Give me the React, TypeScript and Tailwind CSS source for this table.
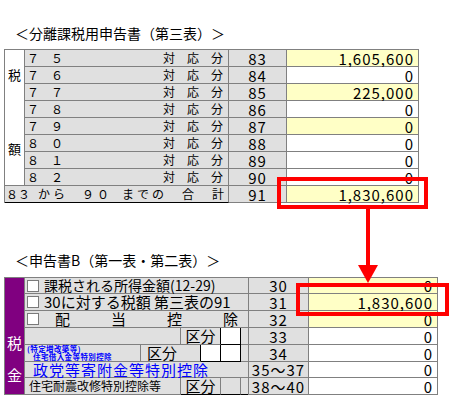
const topRows = [
  { label: '７　５', no: '83', value: '1,605,600', yellow: true },
  { label: '７　６', no: '84', value: '0', yellow: false },
  { label: '７　７', no: '85', value: '225,000', yellow: true },
  { label: '７　８', no: '86', value: '0', yellow: false },
  { label: '７　９', no: '87', value: '0', yellow: true },
  { label: '８　０', no: '88', value: '0', yellow: false },
  { label: '８　１', no: '89', value: '0', yellow: false },
  { label: '８　２', no: '90', value: '0', yellow: false },
];

const cell = 'border-b border-r border-[#808080]';
const num = "font-['Noto_Sans_CJK_JP',sans-serif] text-[15px] leading-[15px] tracking-[1px]";

const CheckBox = () => (
  <span className="ml-[2px] h-[12px] w-[12px] shrink-0 border border-[#7a7a7a] bg-white" />
);

const NoCell = ({ no, w }: { no: string; w: string }) => (
  <div className={`${cell} ${w} ${num} flex items-center justify-center bg-[#e0e0e0] tracking-[0px]`}>{no}</div>
);

const ValueCell = ({ value, yellow, w }: { value: string; yellow?: boolean; w: string }) => (
  <div className={`${cell} ${w} ${num} flex items-center justify-end pr-[4px] ${yellow ? 'bg-[#ffffc6]' : 'bg-white'}`}>
    {value}
  </div>
);

export default function App() {
  return (
    <div className="relative h-[401px] w-[467px] overflow-hidden bg-white font-['Noto_Sans_CJK_JP',sans-serif] text-black">
      <div className="pl-[15px] pt-[23px] text-[14px] leading-[20px]">＜分離課税用申告書（第三表）＞</div>

      {/* 第三表 */}
      <div className="ml-[4px] mt-[6px] w-[415px] border-l border-t border-[#808080]">
        <div className="flex">
          <div className={`${cell} flex h-[136px] w-[20px] flex-col items-center bg-white text-[13px] leading-[16px]`}>
            <span className="mt-[17px]">税</span>
            <span className="mt-[58px]">額</span>
          </div>
          <div className="flex flex-col">
            {topRows.map((r) => (
              <div key={r.no} className="flex h-[17px]">
                <div className={`${cell} flex w-[204px] items-center justify-between bg-[#e0e0e0] pl-[2px] pr-[5px] text-[12px] leading-[16px]`}>
                  <span>{r.label}</span>
                  <span>対　応　分</span>
                </div>
                <NoCell no={r.no} w="w-[58px]" />
                <ValueCell value={r.value} yellow={r.yellow} w="w-[132px]" />
              </div>
            ))}
          </div>
        </div>
        <div className="flex h-[17px]">
          <div className="flex w-[224px] items-center border-b border-r border-b-black border-r-[#808080] bg-[#e0e0e0] pl-[1px] text-[12px] leading-[16px]">
            <span className="tracking-[0px]">８３</span>
            <span className="ml-[8px] tracking-[3px]">から</span>
            <span className="ml-[14px] tracking-[3px]">９０</span>
            <span className="ml-[10px] tracking-[3px]">までの</span>
            <span className="ml-[15px]">合</span>
            <span className="ml-[18px]">計</span>
          </div>
          <NoCell no="91" w="w-[58px]" />
          <ValueCell value="1,830,600" yellow w="w-[132px]" />
        </div>
      </div>

      <div className="pl-[15px] pt-[47px] text-[14px] leading-[20px]">＜申告書B（第一表・第二表）＞</div>

      {/* 第一表・第二表 */}
      <div className="ml-[4px] mt-[7px] flex w-[434px] border-l border-t border-[#808080]">
        <div className={`${cell} flex h-[117px] w-[20px] flex-col items-center justify-end gap-[14px] bg-[#800080] pb-[10px] text-[15px] leading-[18px] text-white`}>
          <span>税</span>
          <span>金</span>
        </div>
        <div className="flex flex-col">
          <div className="flex h-[16px]">
            <div className={`${cell} flex w-[224px] items-center gap-[5px] bg-[#e0e0e0] text-[14px] leading-[15px]`}>
              <CheckBox />
              <span>課税される所得金額(12-29)</span>
            </div>
            <NoCell no="30" w="w-[60px]" />
            <ValueCell value="0" yellow w="w-[129px]" />
          </div>
          <div className="flex h-[17px]">
            <div className={`${cell} flex w-[224px] items-center gap-[5px] bg-[#e0e0e0] text-[15px] leading-[16px]`}>
              <CheckBox />
              <span>30に対する税額 第三表の91</span>
            </div>
            <NoCell no="31" w="w-[60px]" />
            <ValueCell value="1,830,600" yellow w="w-[129px]" />
          </div>
          <div className="flex h-[17px]">
            <div className={`${cell} flex w-[224px] items-center bg-[#e0e0e0] text-[15px] leading-[16px]`}>
              <CheckBox />
              <span className="flex flex-1 justify-between pl-[16px] pr-[10px]">
                <span>配</span>
                <span>当</span>
                <span>控</span>
                <span>除</span>
              </span>
            </div>
            <NoCell no="32" w="w-[60px]" />
            <ValueCell value="0" yellow w="w-[129px]" />
          </div>
          <div className="flex h-[17px]">
            <div className="flex w-[224px] border-r border-[#808080]">
              <div className={`${cell} w-[156px] bg-[#e0e0e0]`} />
              <div className="flex w-[40px] items-center justify-center border-b border-r border-b-[#808080] border-r-black bg-[#e0e0e0] text-[15px] leading-[16px]">区分</div>
              <div className="w-[20px] border-b border-r border-black bg-white" />
              <div className="w-[7px] border-b border-[#808080] bg-[#e0e0e0]" />
            </div>
            <NoCell no="33" w="w-[60px]" />
            <ValueCell value="0" w="w-[129px]" />
          </div>
          <div className="flex h-[17px]">
            <div className="flex w-[224px] border-r border-[#808080]">
              <div className={`${cell} flex w-[116px] flex-col justify-center bg-[#e0e0e0] pl-[2px] text-[7.5px] font-bold leading-[8px] tracking-[0.4px] text-[#0000ff]`}>
                <span>(特定増改築等)</span>
                <span className="pl-[6px]">住宅借入金等特別控除</span>
              </div>
              <div className="flex w-[60px] items-center border-b border-r border-b-[#808080] border-r-black bg-[#e0e0e0] pl-[6px] text-[15px] leading-[16px]">区分</div>
              <div className="w-[20px] border-b border-r border-black bg-white" />
              <div className="w-[20px] border-b border-r border-black bg-white" />
              <div className="w-[7px] border-b border-[#808080] bg-[#e0e0e0]" />
            </div>
            <NoCell no="34" w="w-[60px]" />
            <ValueCell value="0" w="w-[129px]" />
          </div>
          <div className="flex h-[16px]">
            <div className={`${cell} flex w-[224px] items-center bg-[#e0e0e0] pl-[8px] text-[15px] leading-[15px] tracking-[1px] text-[#0000ff]`}>
              政党等寄附金等特別控除
            </div>
            <NoCell no="35〜37" w="w-[60px]" />
            <ValueCell value="0" w="w-[129px]" />
          </div>
          <div className="flex h-[17px]">
            <div className="flex w-[224px] border-r border-[#808080]">
              <div className={`${cell} flex w-[156px] items-center bg-[#e0e0e0] pl-[4px] text-[12px] leading-[16px]`}>住宅耐震改修特別控除等</div>
              <div className="flex w-[40px] items-center justify-center border-b border-r border-b-black border-r-[#808080] bg-[#e0e0e0] text-[15px] leading-[16px]">区分</div>
              <div className="w-[20px] border-b border-r border-b-black border-r-[#808080] bg-[#e0e0e0]" />
              <div className="w-[7px] border-b border-black bg-[#e0e0e0]" />
            </div>
            <NoCell no="38〜40" w="w-[60px]" />
            <ValueCell value="0" w="w-[129px]" />
          </div>
        </div>
      </div>

      {/* highlight overlays */}
      <div className="absolute left-[277px] top-[177px] h-[32px] w-[151px] border-[4px] border-[#ff0000]" />
      <div className="absolute left-[296px] top-[283px] h-[33px] w-[153px] border-[4px] border-[#ff0000]" />
      <svg className="absolute left-[356px] top-[207px]" width="24" height="77" viewBox="0 0 24 77">
        <rect x="10" y="0" width="4" height="60" fill="#ff0000" />
        <polygon points="2,58 22,58 12,76" fill="#ff0000" />
      </svg>
    </div>
  );
}
